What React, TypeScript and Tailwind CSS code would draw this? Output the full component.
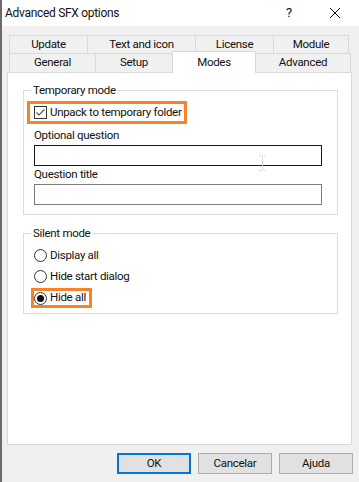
import React from 'react';

const font = "font-['Roboto','Liberation_Sans',sans-serif]";

function Tab({ label, w, selected, first }: { label: string; w: string; selected?: boolean; first?: boolean }) {
  if (selected) {
    return (
      <div className={`${w} relative z-10 -mt-[2px] h-[22px] -ml-px bg-white border border-b-0 border-[#d9d9d9] flex items-start justify-center pt-[2px]`}>
        {label}
      </div>
    );
  }
  return (
    <div className={`${w} h-full ${first ? '' : '-ml-px'} bg-[#f0f0f0] border border-[#d9d9d9] flex items-center justify-center`}>
      {label}
    </div>
  );
}

function Checkbox() {
  return (
    <div className="w-[13px] h-[13px] shrink-0 border border-[#333] bg-white flex items-center justify-center">
      <svg width="11" height="11" viewBox="0 0 11 11">
        <polyline points="1.5,5.5 4,8 9.5,2.5" fill="none" stroke="#555" strokeWidth="1.2" />
      </svg>
    </div>
  );
}

function Radio({ checked }: { checked?: boolean }) {
  return (
    <div className="w-[13px] h-[13px] shrink-0 rounded-full border border-[#333] bg-white flex items-center justify-center">
      {checked && <div className="w-[7px] h-[7px] rounded-full bg-[#111]" />}
    </div>
  );
}

function Group({ label, children, className }: { label: string; children: React.ReactNode; className?: string }) {
  return (
    <div className={`relative border border-[#dcdcdc] ${className ?? ''}`}>
      <span className="absolute left-[7px] -top-[9px] bg-white px-[2px] leading-[16px]">{label}</span>
      {children}
    </div>
  );
}

export default function App() {
  return (
    <div className={`${font} text-[11.5px] tracking-[-0.3px] whitespace-nowrap text-[#111] w-[359px] h-[482px] bg-[#f0f0f0] border-l-2 border-[#6b6b6b] flex flex-col overflow-hidden`}>
      {/* title bar */}
      <div className="h-[26px] bg-white flex items-center shrink-0">
        <span className="pl-[3px] pb-[1px] text-[12px]">Advanced SFX options</span>
        <div className="ml-auto flex items-center">
          <span className="w-[12px] text-center mr-[34px] text-[13px]">?</span>
          <svg width="12" height="12" viewBox="0 0 12 12" className="mr-[18px]">
            <path d="M1 1 L11 11 M11 1 L1 11" stroke="#111" strokeWidth="1" />
          </svg>
        </div>
      </div>

      {/* tabs */}
      <div className="pl-[7px] pt-[9px] shrink-0">
        <div className="flex h-[19px]">
          <Tab label="Update" w="w-[79px]" first />
          <Tab label="Text and icon" w="w-[109px]" />
          <Tab label="License" w="w-[79px]" />
          <Tab label="Module" w="w-[76px]" />
        </div>
        <div className="flex h-[20px] -mt-px">
          <Tab label="General" w="w-[87px]" first />
          <Tab label="Setup" w="w-[78px]" />
          <Tab label="Modes" w="w-[84px]" selected />
          <Tab label="Advanced" w="w-[96px]" />
        </div>
      </div>

      {/* panel */}
      <div className="relative -mt-px ml-[5px] w-[345px] h-[373px] bg-white border border-[#d9d9d9] shrink-0 flex flex-col">
        <Group label="Temporary mode" className="ml-[15px] mt-[17px] w-[315px] h-[125px]">
          <div className="flex flex-col">
            <div className="ml-[3px] mt-[10px] w-[160px] h-[23px] border-[3px] border-[#f7822a] flex items-center pl-[4px]">
              <Checkbox />
              <span className="ml-[3px] leading-[15px]">Unpack to temporary folder</span>
            </div>
            <span className="ml-[10px] mt-[4px] leading-[15px]">Optional question</span>
            <div className="ml-[10px] mt-[2px] w-[288px] h-[21px] border border-[#1a1a1a] bg-white" />
            <span className="ml-[10px] mt-[1px] leading-[15px]">Question title</span>
            <div className="ml-[10px] mt-[2px] w-[288px] h-[21px] border border-[#7a7a7a] bg-white" />
          </div>
        </Group>

        <Group label="Silent mode" className="ml-[15px] mt-[18px] w-[315px] h-[81px]">
          <div className="flex flex-col pt-[11px]">
            <div className="ml-[10px] h-[21px] flex items-center">
              <Radio />
              <span className="ml-[3px]">Display all</span>
            </div>
            <div className="ml-[10px] h-[21px] flex items-center">
              <Radio />
              <span className="ml-[3px]">Hide start dialog</span>
            </div>
            <div className="ml-[7px] mt-[1px] w-[61px] h-[20px] border-[3px] border-[#f7822a] flex items-center">
              <Radio checked />
              <span className="ml-[3px]">Hide all</span>
            </div>
          </div>
        </Group>

        {/* mouse I-beam cursor */}
        <svg width="7" height="16" viewBox="0 0 7 16" className="absolute left-[251px] top-[82px]">
          <path d="M0.5 0.5 H2.5 M4.5 0.5 H6.5 M3.5 1 V15 M0.5 15.5 H2.5 M4.5 15.5 H6.5" stroke="#d8d8d8" strokeWidth="1" fill="none" />
        </svg>
      </div>

      {/* buttons */}
      <div className="flex justify-end gap-[7px] pr-[6px] mt-[8px]">
        <button className="w-[74px] h-[21px] bg-[#e1e1e1] border-2 border-[#0078d7]">OK</button>
        <button className="w-[74px] h-[21px] bg-[#e1e1e1] border border-[#adadad]">Cancelar</button>
        <button className="w-[74px] h-[21px] bg-[#e1e1e1] border border-[#adadad]">Ajuda</button>
      </div>
    </div>
  );
}
